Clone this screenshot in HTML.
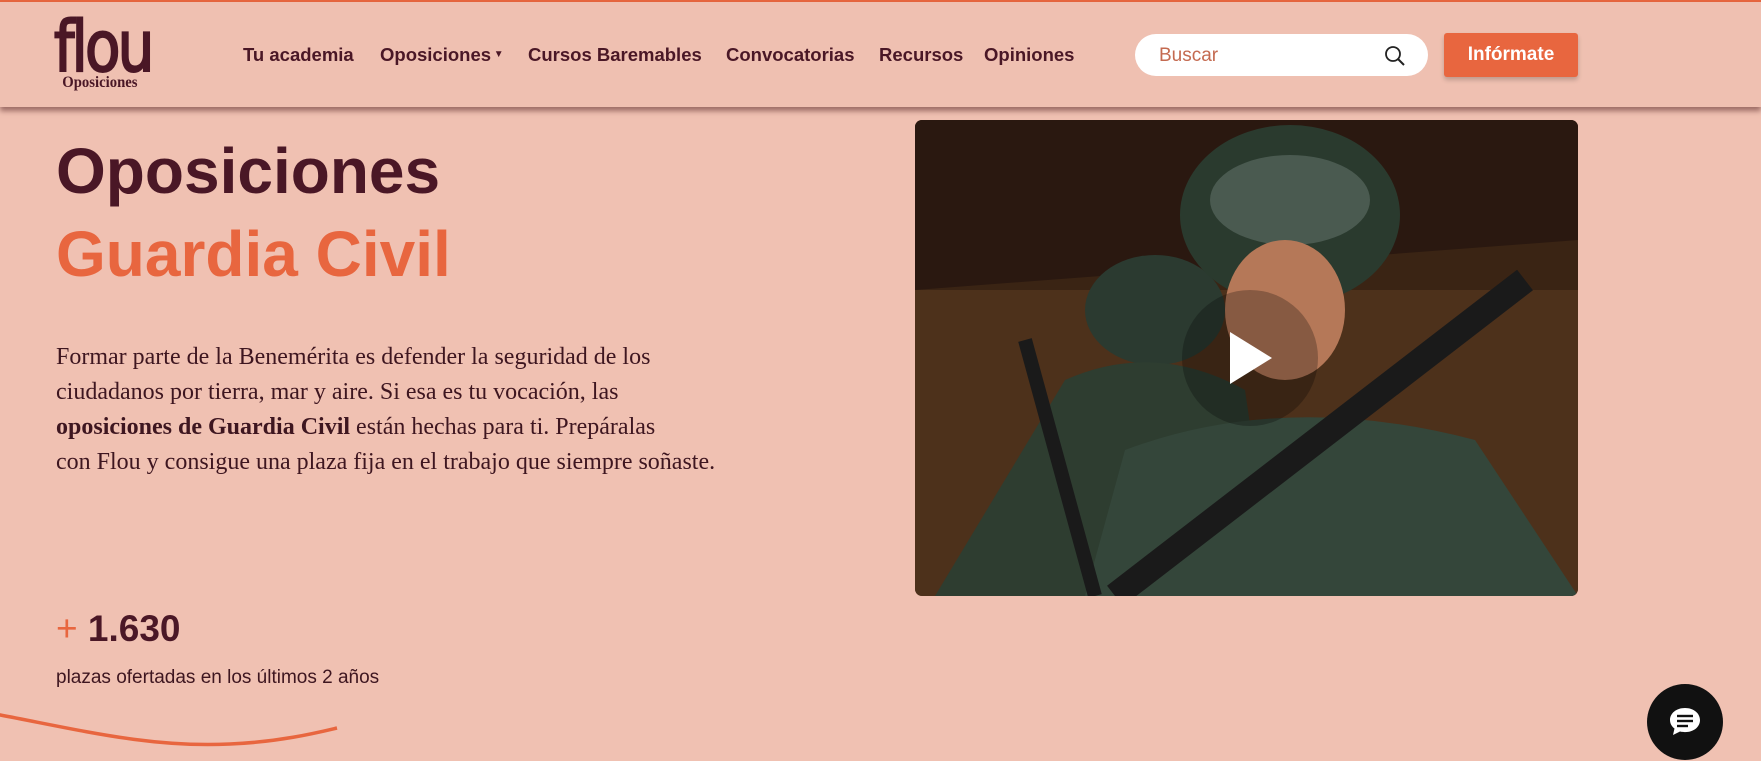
<!DOCTYPE html>
<html><head><meta charset="utf-8"><style>
*{margin:0;padding:0;box-sizing:border-box}
body{width:1761px;height:761px;overflow:hidden;background:#f0c1b2;font-family:"Liberation Sans",sans-serif;color:#4a1726;position:relative}
.topline{position:absolute;left:0;top:0;width:100%;height:2px;background:#e8663f}
header{position:absolute;left:0;top:2px;width:100%;height:105px;background:#efc0b1;box-shadow:0 4px 5px rgba(90,40,40,.55)}
.logo{position:absolute;left:54px;top:4px;font-size:70px;font-weight:normal;-webkit-text-stroke:2px #4a1726;letter-spacing:-3px;color:#4a1726;font-family:"DejaVu Sans Condensed","Liberation Sans",sans-serif;transform:scaleX(.92);transform-origin:left}
.logo small{position:absolute;left:9px;top:68px;font-family:"Liberation Serif",serif;font-size:16px;letter-spacing:0;font-weight:bold;-webkit-text-stroke:0}
nav a{position:absolute;top:42px;font-size:18.5px;font-weight:bold;color:#4a1726;text-decoration:none;white-space:nowrap}
.search{position:absolute;left:1135px;top:32px;width:293px;height:42px;background:#fff;border-radius:21px;padding:11px 24px;color:#c46a50;font-size:19px}
.btn{position:absolute;left:1444px;top:31px;width:134px;height:44px;background:#e8663f;border-radius:3px;color:#fff;font-weight:bold;font-size:19px;text-align:center;line-height:44px;box-shadow:0 3px 5px rgba(0,0,0,.2)}
h1{position:absolute;left:56px;font-size:64px;font-weight:bold;line-height:1}
p{position:absolute;left:56px;top:340px;white-space:nowrap;font-family:"Liberation Serif",serif;font-size:24px;line-height:35px;color:#3e1620}
.video{position:absolute;left:915px;top:120px;width:663px;height:476px;border-radius:7px;overflow:hidden}
</style></head><body>
<div class="topline"></div>
<header>
<div class="logo">flou<small>Oposiciones</small></div>
<nav>
<a style="left:243px">Tu academia</a>
<a style="left:380px">Oposiciones<span style="font-size:10px;vertical-align:4px"> ▼</span></a>
<a style="left:528px">Cursos Baremables</a>
<a style="left:726px">Convocatorias</a>
<a style="left:879px">Recursos</a>
<a style="left:984px">Opiniones</a>
</nav>
<div class="search">Buscar
<svg style="position:absolute;right:22px;top:11px" width="22" height="22" viewBox="0 0 22 22"><circle cx="9" cy="9" r="7" fill="none" stroke="#222" stroke-width="1.8"/><line x1="14" y1="14" x2="20" y2="20" stroke="#222" stroke-width="2"/></svg></div>
<div class="btn">Infórmate</div>
</header>
<h1 style="top:139px">Oposiciones</h1>
<h1 style="top:222px;color:#e8663f">Guardia Civil</h1>
<p>Formar parte de la Benemérita es defender la seguridad de los<br>ciudadanos por tierra, mar y aire. Si esa es tu vocación, las<br><b>oposiciones de Guardia Civil</b> están hechas para ti. Prepáralas<br>con Flou y consigue una plaza fija en el trabajo que siempre soñaste.</p>
<div style="position:absolute;left:56px;top:608px;font-size:37px;font-weight:bold"><span style="color:#e8663f;font-weight:normal">+</span> 1.630</div>
<div style="position:absolute;left:56px;top:667px;font-size:19px;color:#3e1620">plazas ofertadas en los últimos 2 años</div>
<svg style="position:absolute;left:0;top:700px" width="350" height="61"><path d="M-5 14 C80 30 150 48 230 44 C280 42 320 32 337 28" fill="none" stroke="#e8663f" stroke-width="3.5"/></svg>
<div class="video">
<svg width="663" height="476" viewBox="0 0 663 476">
<rect width="663" height="476" fill="#3a2414"/>
<path d="M0 0 L663 0 L663 120 L0 170Z" fill="#2a1810"/>
<rect x="0" y="170" width="663" height="306" fill="#5a3a20" opacity=".6"/>
<ellipse cx="240" cy="190" rx="70" ry="55" fill="#2b3a30"/>
<path d="M150 260 Q240 220 330 270 L360 476 L20 476Z" fill="#2e3d30"/>
<ellipse cx="375" cy="95" rx="110" ry="90" fill="#2a3a2e"/>
<ellipse cx="375" cy="80" rx="80" ry="45" fill="#4a5a50"/>
<ellipse cx="370" cy="190" rx="60" ry="70" fill="#b57858"/>
<path d="M210 330 Q370 270 560 320 L663 476 L170 476Z" fill="#34463a"/>
<line x1="200" y1="476" x2="610" y2="160" stroke="#1a1a1a" stroke-width="26"/>
<line x1="110" y1="220" x2="180" y2="476" stroke="#1a1a1a" stroke-width="14"/>
<circle cx="335" cy="238" r="68" fill="#000" opacity=".25"/>
<path d="M315 212 L315 264 L357 238Z" fill="#fff"/>
</svg></div>
<div style="position:absolute;left:1647px;top:684px;width:76px;height:76px;border-radius:50%;background:#111">
<svg style="position:absolute;left:20px;top:20px" width="36" height="36" viewBox="0 0 36 36"><path d="M18 4C9 4 3 9.5 3 16c0 3.5 1.8 6.5 4.5 8.5L6 31l7-3.5c1.6.4 3.2.6 5 .6 9 0 15-5.5 15-12S27 4 18 4z" fill="#fff"/><line x1="10" y1="12" x2="26" y2="12" stroke="#111" stroke-width="2.4"/><line x1="10" y1="17" x2="26" y2="17" stroke="#111" stroke-width="2.4"/><line x1="10" y1="22" x2="21" y2="22" stroke="#111" stroke-width="2.4"/></svg></div>
</body></html>
